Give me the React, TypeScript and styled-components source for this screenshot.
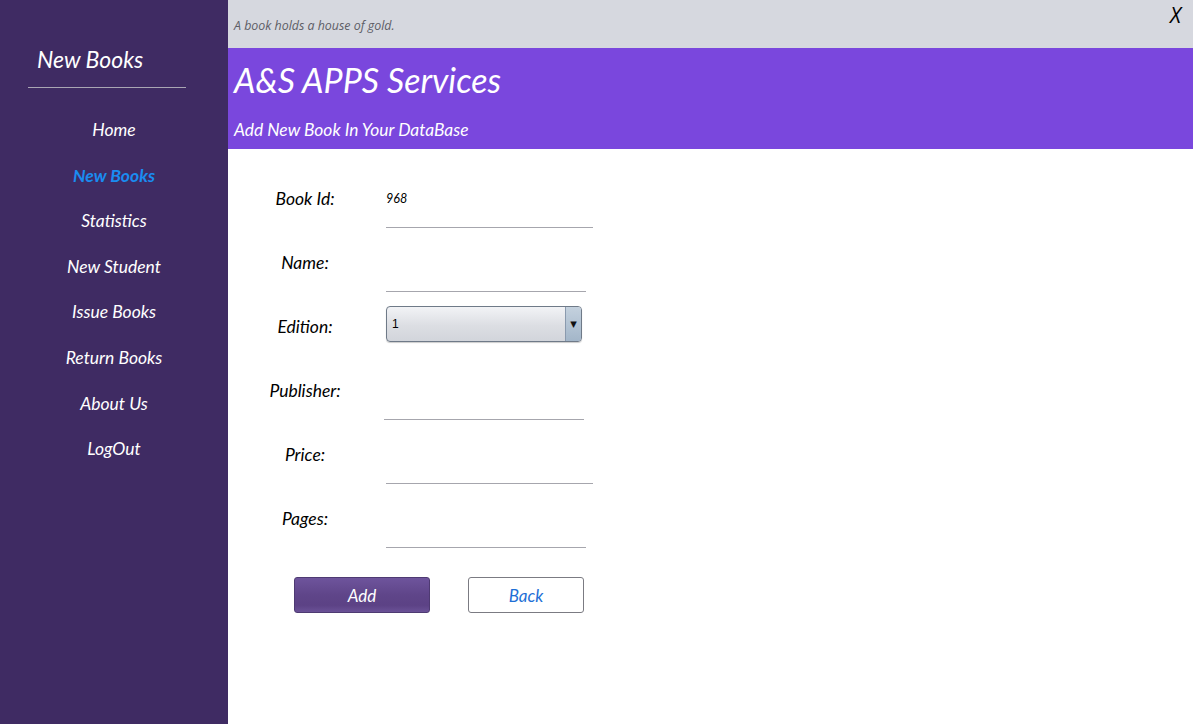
import styled, { createGlobalStyle } from "styled-components";

const GlobalStyle = createGlobalStyle`
  html, body {
    margin: 0;
    padding: 0;
    background: #ffffff;
    font-family: "Lato", "Open Sans", sans-serif;
  }
`;

const Page = styled.div`
  display: flex;
  width: 1193px;
  height: 724px;
  overflow: hidden;
`;

const Sidebar = styled.aside`
  width: 228px;
  flex-shrink: 0;
  background: #3f2b63;
  display: flex;
  flex-direction: column;
`;

const SideTitle = styled.h1`
  margin: 44px 0 0 37px;
  font-size: 23px;
  line-height: 30px;
  font-weight: 400;
  font-style: italic;
  color: #ffffff;
`;

const Divider = styled.hr`
  margin: 13px 0 0 28px;
  width: 158px;
  border: none;
  border-top: 1px solid #a9a6b3;
`;

const Nav = styled.nav`
  display: flex;
  flex-direction: column;
  align-items: center;
  margin-top: 31px;
`;

const NavItem = styled.a<{ $active?: boolean }>`
  height: 45.6px;
  line-height: 22px;
  font-size: 17.5px;
  font-style: italic;
  font-weight: ${({ $active }) => ($active ? 700 : 400)};
  color: ${({ $active }) => ($active ? "#1a8cf0" : "#ffffff")};
  text-decoration: none;
  cursor: pointer;
`;

const Main = styled.main`
  flex: 1;
  display: flex;
  flex-direction: column;
`;

const TopBar = styled.div`
  height: 48px;
  background: #d6d8df;
  display: flex;
  justify-content: space-between;
  padding: 0 12px 0 6px;
`;

const Quote = styled.span`
  margin-top: 17px;
  font-family: "Open Sans", sans-serif;
  font-size: 12.4px;
  font-style: italic;
  color: #5d5d66;
`;

const CloseButton = styled.button`
  align-self: flex-start;
  margin-top: 1px;
  padding: 0;
  border: none;
  background: none;
  font-family: "Open Sans", sans-serif;
  font-size: 21px;
  font-style: italic;
  color: #000000;
  cursor: pointer;
`;

const Banner = styled.header`
  height: 101px;
  background: #7a47dd;
  padding: 0 6px;
  color: #ffffff;
  display: flex;
  flex-direction: column;
`;

const BannerTitle = styled.h2`
  margin: 13px 0 0;
  font-size: 34px;
  line-height: 38px;
  font-weight: 400;
  font-style: italic;
`;

const BannerSub = styled.p`
  margin: 20px 0 0;
  font-size: 17.4px;
  line-height: 22px;
  font-style: italic;
`;

const Form = styled.form`
  padding: 15px 0 0 22px;
  display: flex;
  flex-direction: column;
`;

const Row = styled.div`
  display: grid;
  grid-template-columns: 110px auto;
  column-gap: 26px;
  height: 64px;
`;

const Label = styled.label`
  align-self: start;
  margin-top: 24px;
  text-align: center;
  font-size: 17.5px;
  line-height: 22px;
  font-style: italic;
  color: #000000;
`;

const LineField = styled.div<{ $width: number; $shift?: number }>`
  width: ${({ $width }) => $width}px;
  margin-left: ${({ $shift = 0 }) => $shift}px;
  border-bottom: 1px solid #a6a6ad;
  box-sizing: border-box;
  padding-top: 27px;
  font-size: 12.5px;
  line-height: 16px;
  font-style: italic;
  color: #000000;
`;

const Select = styled.div`
  align-self: center;
  width: 196px;
  height: 36px;
  box-sizing: border-box;
  border: 1px solid #6f7a88;
  border-radius: 4px;
  background: linear-gradient(#f2f3f6, #dcdee3 55%, #d2d5db);
  display: flex;
  align-items: center;
  justify-content: space-between;
  overflow: hidden;
  box-shadow: 0 1px 1px rgba(0, 0, 0, 0.2);
`;

const SelectValue = styled.span`
  padding-left: 5px;
  font-family: "Liberation Sans", Arial, sans-serif;
  font-size: 12px;
  color: #000000;
`;

const SelectArrow = styled.span`
  width: 15px;
  align-self: stretch;
  border-left: 1px solid #8a9aae;
  background: linear-gradient(#c4d1de, #a3b6c9);
  display: flex;
  align-items: center;
  justify-content: center;
  font-family: "DejaVu Sans", sans-serif;
  font-size: 8.5px;
  color: #111111;
`;

const Actions = styled.div`
  display: flex;
  gap: 38px;
  margin: 29px 0 0 44px;
`;

const Button = styled.button<{ $primary?: boolean }>`
  width: ${({ $primary }) => ($primary ? 136 : 116)}px;
  height: 36px;
  border-radius: 3px;
  border: 1px solid ${({ $primary }) => ($primary ? "#4e3a72" : "#7b7b82")};
  background: ${({ $primary }) =>
    $primary
      ? "linear-gradient(#6e549c, #5f4589 50%, #5c4285 80%, #6a5196)"
      : "#ffffff"};
  color: ${({ $primary }) => ($primary ? "#ffffff" : "#1e6fd6")};
  font-family: "Lato", sans-serif;
  font-size: 17px;
  font-style: italic;
  cursor: pointer;
`;

const navItems = [
  "Home",
  "New Books",
  "Statistics",
  "New Student",
  "Issue Books",
  "Return Books",
  "About Us",
  "LogOut",
];

const App = () => {
  return (
    <Page>
      <GlobalStyle />
      <Sidebar>
        <SideTitle>New Books</SideTitle>
        <Divider />
        <Nav>
          {navItems.map((item) => (
            <NavItem key={item} $active={item === "New Books"}>
              {item}
            </NavItem>
          ))}
        </Nav>
      </Sidebar>
      <Main>
        <TopBar>
          <Quote>A book holds a house of gold.</Quote>
          <CloseButton>X</CloseButton>
        </TopBar>
        <Banner>
          <BannerTitle>A&amp;S APPS Services</BannerTitle>
          <BannerSub>Add New Book In Your DataBase</BannerSub>
        </Banner>
        <Form>
          <Row>
            <Label>Book Id:</Label>
            <LineField $width={207}>968</LineField>
          </Row>
          <Row>
            <Label>Name:</Label>
            <LineField $width={200} />
          </Row>
          <Row>
            <Label>Edition:</Label>
            <Select>
              <SelectValue>1</SelectValue>
              <SelectArrow>▼</SelectArrow>
            </Select>
          </Row>
          <Row>
            <Label>Publisher:</Label>
            <LineField $width={200} $shift={-2} />
          </Row>
          <Row>
            <Label>Price:</Label>
            <LineField $width={207} />
          </Row>
          <Row>
            <Label>Pages:</Label>
            <LineField $width={200} />
          </Row>
          <Actions>
            <Button type="button" $primary>
              Add
            </Button>
            <Button type="button">Back</Button>
          </Actions>
        </Form>
      </Main>
    </Page>
  );
};

export default App;
